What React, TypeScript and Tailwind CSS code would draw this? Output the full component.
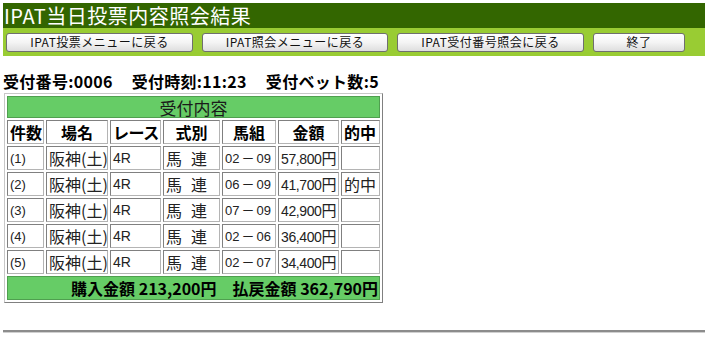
import React from "react";

const rows = [
  { no: "(1)", a: "02", b: "09", amount: "57,800", hit: "" },
  { no: "(2)", a: "06", b: "09", amount: "41,700", hit: "的中" },
  { no: "(3)", a: "07", b: "09", amount: "42,900", hit: "" },
  { no: "(4)", a: "02", b: "06", amount: "36,400", hit: "" },
  { no: "(5)", a: "02", b: "07", amount: "34,400", hit: "" },
];

const buttons = [
  { label: "IPAT投票メニューに戻る", w: "w-[187px]" },
  { label: "IPAT照会メニューに戻る", w: "w-[186px]" },
  { label: "IPAT受付番号照会に戻る", w: "w-[187px]" },
  { label: "終了", w: "w-[92px]" },
];

const jp = { fontFamily: '"Noto Sans CJK JP", sans-serif' };

const cell =
  "border border-[#b4b4b4] border-t-[#808080] border-l-[#808080] h-[24px] px-[2px] py-0 whitespace-nowrap overflow-hidden";

export default function App() {
  return (
    <div
      className="bg-white w-[705px] h-[363px] overflow-hidden pt-[3px] pl-[3px] text-[#222]"
      style={{ fontFamily: '"Liberation Sans", "Noto Sans CJK JP", sans-serif' }}
    >
      {/* title */}
      <div className="bg-[#336600] h-[25px] flex items-center pl-[1px]">
        <h1 className="text-white text-[20px] leading-none font-normal tracking-[0.5px]" style={jp}>
          IPAT当日投票内容照会結果
        </h1>
      </div>
      <div className="bg-[#99cc33] h-[28px] flex items-center pl-[3px] gap-[9px]">
        {buttons.map((b) => (
          <button
            key={b.label}
            className={`${b.w} h-[19px] rounded-[3px] border border-[#6f6f6f] bg-linear-to-b from-white via-[#f4f4f4] to-[#dedede] text-[12px] leading-none text-[#111] tracking-[0.5px]`}
            style={jp}
          >
            {b.label}
          </button>
        ))}
      </div>

      {/* info */}
      <div
        className="mt-[17px] flex text-[16px] font-bold leading-none text-black gap-[19px] tracking-[0.3px]"
        style={jp}
      >
        <span>受付番号:0006</span>
        <span>受付時刻:11:23</span>
        <span>受付ベット数:5</span>
      </div>

      {/* result table */}
      <table className="mt-[4px] ml-[1px] w-[379px] table-fixed border-separate border-spacing-[2px] border border-[#c8c8c8] border-r-[#808080] border-b-[#808080] text-[15px] leading-none">
        <colgroup>
          <col className="w-[37px]" />
          <col className="w-[62px]" />
          <col className="w-[51px]" />
          <col className="w-[57px]" />
          <col className="w-[54px]" />
          <col className="w-[61px]" />
          <col className="w-[39px]" />
        </colgroup>
        <thead style={jp}>
          <tr>
            <th
              colSpan={7}
              className="bg-[#66cc66] h-[22px] font-normal text-[17px] text-[#1a1a1a] border border-[#4f9f4f]"
            >
              受付内容
            </th>
          </tr>
          <tr className="text-[16px] font-bold text-black">
            <th className={`${cell} px-0`}>件数</th>
            <th className={cell}>場名</th>
            <th className={`${cell} text-left px-0 tracking-[-0.5px]`}>レース</th>
            <th className={cell}>式別</th>
            <th className={cell}>馬組</th>
            <th className={cell}>金額</th>
            <th className={`${cell} text-left px-0`}>的中</th>
          </tr>
        </thead>
        <tbody>
          {rows.map((r) => (
            <tr key={r.no}>
              <td className={`${cell} text-[13px]`}>{r.no}</td>
              <td className={`${cell} text-[16px] px-[1px]`} style={jp}>
                阪神(土)
              </td>
              <td className={`${cell} text-[14px]`}>4R</td>
              <td className={`${cell} text-[16px]`} style={jp}>
                <span className="inline-flex gap-[9px]">
                  <span>馬</span>
                  <span>連</span>
                </span>
              </td>
              <td className={`${cell} text-[13px] px-[1px]`}>
                {r.a}
                <span className="mx-[2px]" style={jp}>
                  －
                </span>
                {r.b}
              </td>
              <td className={`${cell} text-[14px] tracking-[-0.4px]`}>
                {r.amount}
                <span className="text-[15px]" style={jp}>
                  円
                </span>
              </td>
              <td className={`${cell} px-0 text-[16px]`} style={jp}>
                {r.hit}
              </td>
            </tr>
          ))}
          <tr>
            <td
              colSpan={7}
              className="bg-[#66cc66] h-[24px] text-right font-bold text-[16px] text-black border border-[#4f9f4f] pr-[1px] whitespace-nowrap"
              style={jp}
            >
              購入金額 213,200円　払戻金額 362,790円
            </td>
          </tr>
        </tbody>
      </table>

      <hr className="mt-[27px] border-0 border-t-2 border-t-[#8c8c8c] border-b border-b-[#d0d0d0]" />
    </div>
  );
}
